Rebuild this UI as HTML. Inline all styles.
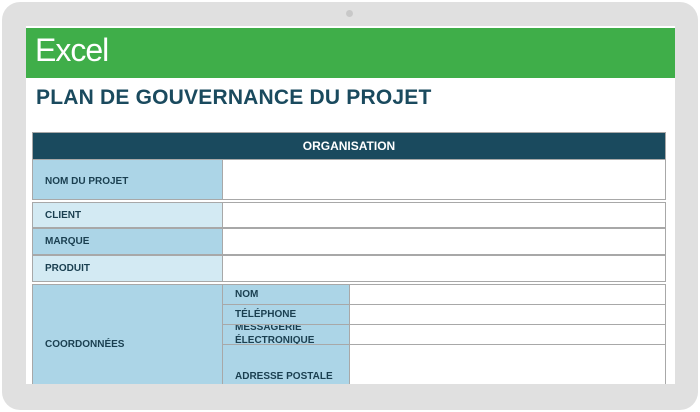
<!DOCTYPE html>
<html><head><style>
*{margin:0;padding:0;box-sizing:border-box}
body{width:700px;height:412px;background:#fff;position:relative;overflow:hidden;font-family:"Liberation Sans",sans-serif}
.frame{position:absolute;left:2px;top:2px;width:696px;height:408px;background:#e0e0e0;border-radius:18px}
.scr{position:absolute;left:26px;top:26px;width:649px;height:358px;background:#fff}
.cam{position:absolute;left:346px;top:10px;width:7px;height:7px;border-radius:50%;background:#c8c8c8}
.g{position:absolute;left:26px;top:28px;width:649px;height:50px;background:#3fae49;color:#fff;font-size:32px;padding-left:9px;line-height:44px;letter-spacing:-1px}
.t{position:absolute;left:36px;top:86px;font-size:21px;font-weight:bold;color:#1a4a5e;letter-spacing:0.2px}
.c{position:absolute;border:1px solid #a8a8a8;font-size:10px;font-weight:bold;color:#1a3f50;display:flex;align-items:center;padding-left:12px}
.b{background:#acd5e7}.l{background:#d3eaf3}.w{background:#fff}
</style></head><body>
<div class="frame"></div><div class="cam"></div>
<div class="scr"></div>
<div class="g">Excel</div>
<div class="t">PLAN DE GOUVERNANCE DU PROJET</div>
<div class="c" style="left:32px;top:132px;width:634px;height:28px;background:#1a4a5e;color:#fff;justify-content:center;padding:0;font-size:12px">ORGANISATION</div>
<div class="c b" style="left:32px;top:159px;width:191px;height:41px;padding-top:3px">NOM DU PROJET</div>
<div class="c w" style="left:222px;top:159px;width:444px;height:41px"></div>
<div class="c l" style="left:32px;top:202px;width:191px;height:26px">CLIENT</div>
<div class="c w" style="left:222px;top:202px;width:444px;height:26px"></div>
<div class="c b" style="left:32px;top:228px;width:191px;height:27px">MARQUE</div>
<div class="c w" style="left:222px;top:228px;width:444px;height:27px"></div>
<div class="c l" style="left:32px;top:255px;width:191px;height:27px">PRODUIT</div>
<div class="c w" style="left:222px;top:255px;width:444px;height:27px"></div>
<div class="c b" style="left:32px;top:284px;width:191px;height:120px">COORDONNÉES</div>
<div class="c b" style="left:222px;top:284px;width:128px;height:21px">NOM</div>
<div class="c w" style="left:349px;top:284px;width:317px;height:21px"></div>
<div class="c b" style="left:222px;top:304px;width:128px;height:21px">TÉLÉPHONE</div>
<div class="c w" style="left:349px;top:304px;width:317px;height:21px"></div>
<div class="c b" style="left:222px;top:324px;width:128px;height:21px;line-height:13px;overflow:hidden;align-items:flex-start;padding-top:0"><div style="margin-top:-4px">MESSAGERIE<br>ÉLECTRONIQUE</div></div>
<div class="c w" style="left:349px;top:324px;width:317px;height:21px"></div>
<div class="c b" style="left:222px;top:344px;width:128px;height:64px">ADRESSE POSTALE</div>
<div class="c w" style="left:349px;top:344px;width:317px;height:64px"></div>
<div style="position:absolute;left:0;top:384px;width:700px;height:28px;background:#fff"></div>
<div style="position:absolute;left:2px;top:384px;width:696px;height:26px;background:#e0e0e0;border-radius:0 0 18px 18px"></div>
</body></html>
